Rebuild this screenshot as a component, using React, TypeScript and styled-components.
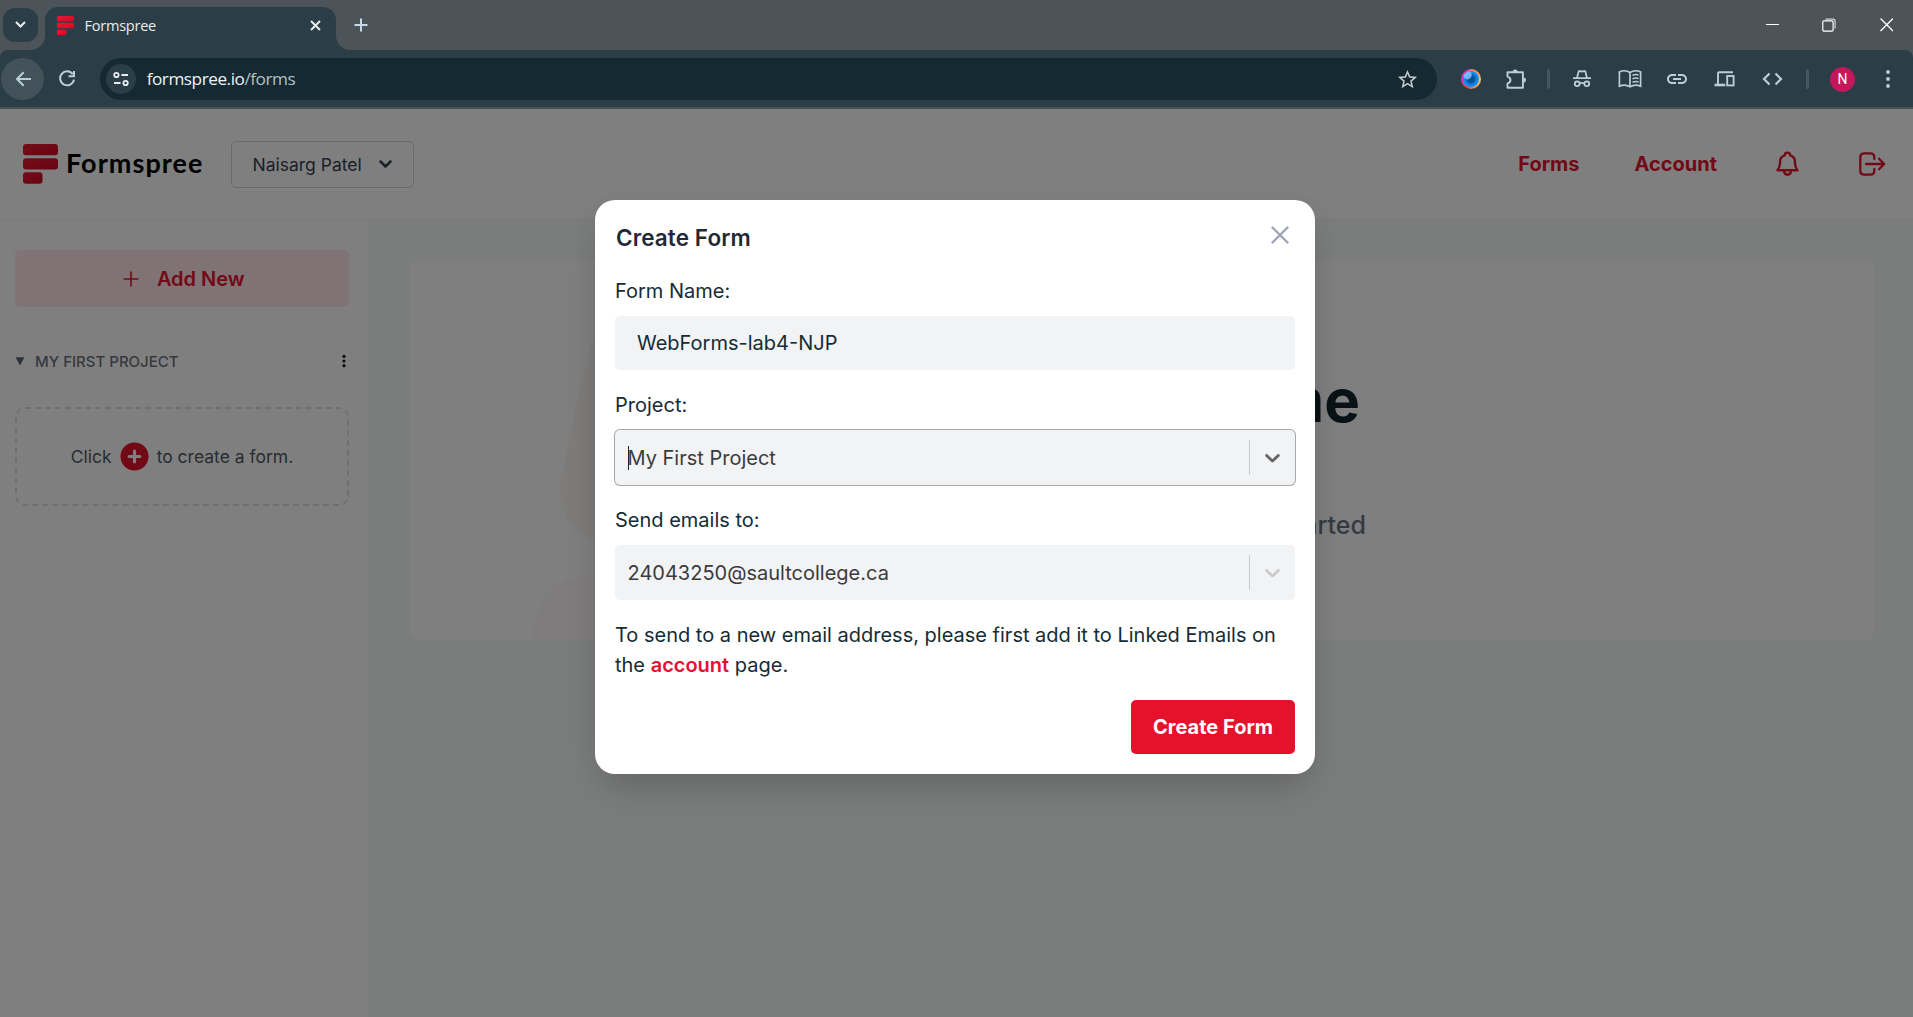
import React from "react";
import styled, { createGlobalStyle } from "styled-components";

const GlobalStyle = createGlobalStyle`
  *, *::before, *::after { box-sizing: border-box; }
  body { margin: 0; overflow: hidden; font-family: Inter, "Liberation Sans", sans-serif; }
  button, input { font: inherit; }
  svg { display: block; flex: none; }
`;

const Window = styled.div`
  display: flex;
  flex-direction: column;
  width: 100vw;
  height: 100vh;
  overflow: hidden;
  background: #4c5459;
`;

/* ---------- browser chrome ---------- */

const TitleBar = styled.div`
  display: flex;
  align-items: flex-start;
  height: 50px;
  padding-left: 3px;
  background: #4c5459;
  color: #e6ecef;
`;

const TabSearch = styled.div`
  display: flex;
  align-items: center;
  justify-content: center;
  width: 35px;
  height: 34px;
  margin-top: 8px;
  border-radius: 12px;
  background: #2b3d46;
`;

const Tab = styled.div`
  position: relative;
  display: flex;
  align-items: center;
  width: 291px;
  height: 43px;
  margin: 7px 0 0 7px;
  padding: 0 15px 7px 11.5px;
  border-radius: 13px 13px 0 0;
  background: #2b3d46;

  &::before, &::after {
    content: "";
    position: absolute;
    bottom: 0;
    width: 14px;
    height: 14px;
  }
  &::before {
    left: -14px;
    background: radial-gradient(circle at 0 0, transparent 13.5px, #2b3d46 14.2px);
  }
  &::after {
    right: -14px;
    background: radial-gradient(circle at 100% 0, transparent 13.5px, #2b3d46 14.2px);
  }
`;

const TabTitle = styled.span`
  flex: 1;
  padding-left: 11px;
  font: 400 14.6px/20px "Open Sans", "Noto Sans", sans-serif;
  letter-spacing: -0.28px;
`;

const NewTab = styled.div`
  margin: 16px 0 0 16px;
`;

const WindowControls = styled.div`
  display: flex;
  align-items: center;
  height: 50px;
  margin-left: auto;
  padding-right: 20px;
  gap: 43.5px;
`;

const Toolbar = styled.div`
  display: flex;
  align-items: center;
  height: 59px;
  padding: 1px 0 0 1px;
  border-bottom: 2px solid #4a5053;
  border-radius: 8px 8px 0 0;
  background: #2b3d46;
  color: #b9cfd8;
`;

const BackButton = styled.div`
  display: flex;
  align-items: center;
  justify-content: center;
  width: 43px;
  height: 42px;
  border-radius: 50%;
  background: #435259;
`;

const ReloadButton = styled.div`
  margin-left: 11px;
`;

const AddressBar = styled.div`
  display: flex;
  align-items: center;
  width: 1337px;
  height: 42px;
  margin: 0 11.5px 0 auto;
  padding: 0 18px 0 6px;
  border-radius: 21px;
  background: #152932;
  color: #c7cbcd;
`;

const SiteInfo = styled.div`
  display: flex;
  align-items: center;
  justify-content: center;
  width: 30px;
  height: 30px;
  border-radius: 50%;
  background: #2b3d46;
  color: #e6ecef;
`;

const Url = styled.div`
  flex: 1;
  padding-left: 10.5px;
  font: 400 17.2px/24px "Open Sans", "Noto Sans", sans-serif;
  letter-spacing: -0.46px;
  color: #b7bfc3;
`;

const UrlHost = styled.span`
  color: #eef2f4;
`;

const ToolSlot = styled.div<{ $w: number }>`
  display: flex;
  align-items: center;
  justify-content: center;
  width: ${(p) => p.$w}px;
`;

const ToolDivider = styled.div<{ $gap: number }>`
  width: 3px;
  height: 20px;
  margin: 0 ${(p) => p.$gap}px;
  border-radius: 2px;
  background: #435862;
`;

const Orb = styled.div`
  width: 20px;
  height: 20px;
  padding: 2px;
  border-radius: 50%;
  background: conic-gradient(#ff7a5c, #ffc04d 90deg, #ff9a4d 150deg, #f0464f 200deg, #e035a8 270deg, #d438c0 340deg, #ff7a5c);
`;

const OrbCore = styled.div`
  width: 16px;
  height: 16px;
  border-radius: 50%;
  background:
    radial-gradient(circle at 28% 25%, rgba(150, 205, 255, 0.75) 0 3.5px, transparent 5px),
    radial-gradient(circle, #064a86 0 2.5px, #0764b8 4px, #0a8bf5 6.5px, #1aa0ff);
`;

const Avatar = styled.div`
  display: flex;
  align-items: center;
  justify-content: center;
  width: 25px;
  height: 25px;
  border-radius: 50%;
  background: #c2185b;
  color: #fff;
  font: 400 14px/25px Roboto, sans-serif;
`;

/* ---------- page ---------- */

const Page = styled.div`
  position: relative;
  flex: 1;
  display: flex;
  flex-direction: column;
  background: #fff;
`;

const Header = styled.header`
  display: flex;
  align-items: center;
  height: 111px;
  padding: 0 27px 0 23px;
  border-bottom: 1px solid #f1f3f4;
`;

const Wordmark = styled.span`
  margin: -3px 0 0 8px;
  font: 700 27px/34px Lato, sans-serif;
  letter-spacing: 1.05px;
  color: #000;
`;

const AccountSelect = styled.div`
  display: flex;
  align-items: center;
  justify-content: space-between;
  width: 183px;
  height: 47px;
  margin: 0 0 0 auto;
  padding: 0 21px 0 20.5px;
  border: 1px solid #d5d5d7;
  border-radius: 5px;
  color: #374151;
  font-size: 17.5px;
`;

const Brand = styled.div`
  display: flex;
  align-items: center;
  width: 391px;
`;

const Nav = styled.nav`
  display: flex;
  align-items: center;
  margin-left: auto;
  color: #e5122e;
  font-size: 20px;
  font-weight: 700;
`;

const NavLink = styled.a`
  margin-right: 55px;
`;

const BellSlot = styled.span`
  margin: 0 60px 0 4px;
`;

const Body = styled.div`
  flex: 1;
  display: flex;
`;

const Sidebar = styled.aside`
  display: flex;
  flex-direction: column;
  width: 370px;
  padding: 30px 20px 0 15px;
  border-right: 1px solid #f3f5f5;
`;

const AddNew = styled.button`
  display: flex;
  align-items: center;
  justify-content: center;
  gap: 17.5px;
  height: 57px;
  padding: 0 0 0 4px;
  border: 0;
  border-radius: 5px;
  background: #ffe7ea;
  color: #e5122e;
  font-size: 20px;
  font-weight: 600;
`;

const ProjectRow = styled.div`
  display: flex;
  align-items: center;
  height: 24px;
  margin-top: 42px;
  color: #6b7280;
  font-size: 15px;
`;

const ProjectName = styled.span`
  flex: 1;
  padding-left: 10px;
  font-weight: 500;
  font-size: 15px;
`;

const EmptyBox = styled.div`
  display: flex;
  align-items: center;
  justify-content: center;
  gap: 8px;
  height: 99px;
  margin-top: 34px;
  border: 2px dashed #e1e1e3;
  border-radius: 10px;
  color: #4f5965;
  font-size: 17.5px;
`;

const Main = styled.main`
  flex: 1;
  padding: 40px 39px 0 40px;
  background: #f7fbf9;
`;

const Card = styled.section`
  position: relative;
  display: flex;
  flex-direction: column;
  align-items: flex-end;
  height: 380px;
  padding-top: 104px;
  border-radius: 10px;
  overflow: hidden;
  background: #fff;
`;

const CardArt = styled.svg`
  position: absolute;
  left: 0;
  top: 0;
`;

const CardTitle = styled.h1`
  margin: 0 514px 0 0;
  font-size: 60px;
  line-height: 72px;
  font-weight: 700;
  color: #12262e;
`;

const CardText = styled.p`
  margin: 69px 508px 0 0;
  font-size: 25px;
  line-height: 40px;
  font-weight: 500;
  color: #687587;
`;

/* ---------- dialog ---------- */

const Overlay = styled.div`
  position: absolute;
  inset: 0;
  display: flex;
  align-items: flex-start;
  justify-content: center;
  padding: 91px 3px 0 0;
  background: rgba(0, 0, 0, 0.5);
`;

const Dialog = styled.div`
  display: flex;
  flex-direction: column;
  width: 720px;
  height: 574px;
  padding: 20px;
  border-radius: 20px;
  background: #fff;
  box-shadow: 0 20px 40px -10px rgba(0, 0, 0, 0.19), 0 6px 30px -6px rgba(0, 0, 0, 0.06);
  color: #152c36;
  font-size: 20px;
  line-height: 30px;
`;

const DialogHead = styled.div`
  display: flex;
  align-items: center;
  justify-content: space-between;
  height: 36px;
  margin-bottom: 20px;
  padding: 0 6px 0 1px;
`;

const DialogTitle = styled.h2`
  margin: 0;
  font-size: 22.5px;
  font-weight: 600;
  letter-spacing: 0.1px;
  color: #1f2937;
`;

const CloseButton = styled.span`
  margin-top: -6px;
`;

const Label = styled.label`
  height: 30px;
  margin-bottom: 10px;
`;

const TextInput = styled.input`
  height: 54px;
  margin-bottom: 20px;
  padding: 0 22px;
  border: 0;
  border-radius: 5px;
  outline: 0;
  background: #f2f3f5;
  color: #152c36;
`;

const Select = styled.div<{ $focused?: boolean }>`
  display: flex;
  align-items: center;
  height: 55px;
  margin-bottom: 20px;
  padding-left: 12.5px;
  border-radius: 5px;
  background: #f2f3f5;
  color: #3b3b3b;
  box-shadow: ${(p) => (p.$focused ? "0 0 0 1px #a9a9aa" : "none")};
`;

const SelectValue = styled.span`
  position: relative;
  flex: 1;
`;

const Caret = styled.span`
  position: absolute;
  left: 0.5px;
  top: 3px;
  width: 1px;
  height: 24px;
  background: #222;
`;

const SelectToggle = styled.span<{ $muted?: boolean }>`
  display: flex;
  align-items: center;
  height: 35px;
  padding: 0 10px;
  border-left: 1px solid #ccc;
  color: ${(p) => (p.$muted ? "#ccc" : "#666")};
`;

const Hint = styled.p`
  margin: 0;
`;

const HintLine = styled.span`
  display: block;
  white-space: nowrap;
`;

const AccountLink = styled.a`
  font-weight: 600;
  color: #e5122e;
`;

const SubmitButton = styled.button`
  align-self: flex-end;
  width: 164px;
  height: 54px;
  margin-top: 20px;
  padding: 0;
  border: 0;
  border-radius: 5px;
  background: #e6112b;
  color: #fff;
  font-weight: 700;
`;

/* ---------- drawings ---------- */

const Mark = ({ w, h }: { w: number; h: number }) => (
  <svg width={w} height={h} viewBox="0 0 35 39" preserveAspectRatio="none">
    <defs>
      <linearGradient id="mark" x1="0" y1="0" x2="1" y2="1">
        <stop offset="0" stopColor="#ee1733" />
        <stop offset="1" stopColor="#cf0a25" />
      </linearGradient>
    </defs>
    <rect width="35" height="11.2" rx="3" fill="url(#mark)" />
    <rect y="14" width="35" height="11.2" rx="3" fill="url(#mark)" />
    <rect y="28" width="19.5" height="11.2" rx="3" fill="url(#mark)" />
  </svg>
);

type GlyphProps = {
  d: string;
  w?: number;
  h?: number;
  box?: string;
  sw?: number;
  round?: boolean;
  color?: string;
};

const Glyph = ({ d, w = 20, h = w, box = `0 0 ${w} ${h}`, sw = 2, round, color = "currentColor" }: GlyphProps) => (
  <svg
    width={w}
    height={h}
    viewBox={box}
    fill="none"
    stroke={color}
    strokeWidth={sw}
    strokeLinecap={round ? "round" : "butt"}
    strokeLinejoin={round ? "round" : "miter"}
  >
    <path d={d} />
  </svg>
);

const KebabDots = ({ h, gap, r, color = "currentColor" }: { h: number; gap: number; r: number; color?: string }) => (
  <svg width={6} height={h} fill={color}>
    {[-1, 0, 1].map((i) => (
      <circle key={i} cx={3} cy={h / 2 + i * gap} r={r} />
    ))}
  </svg>
);

const SelectChevron = () => (
  <svg width="25" height="25" viewBox="0 0 20 20" fill="currentColor">
    <path d="M4.516 7.548c0.436-0.446 1.043-0.481 1.576 0l3.908 3.747 3.908-3.747c0.533-0.481 1.141-0.446 1.574 0 0.436 0.445 0.408 1.197 0 1.615-0.406 0.418-4.695 4.502-4.695 4.502-0.217 0.223-0.502 0.335-0.787 0.335s-0.57-0.112-0.789-0.335c0 0-4.287-4.084-4.695-4.502s-0.436-1.17 0-1.615z" />
  </svg>
);

const Chrome = () => (
  <>
    <TitleBar>
      <TabSearch>
        <Glyph d="M1 1l4.5 4.5L10 1" w={11} h={8} sw={2.2} color="#e6ecef" />
      </TabSearch>
      <Tab>
        <Mark w={17} h={19} />
        <TabTitle>Formspree</TabTitle>
        <Glyph d="M1 1l9 9M10 1l-9 9" w={11} sw={2} />
      </Tab>
      <NewTab>
        <Glyph d="M9 2.5v13M2.5 9h13" w={18} sw={2} color="#c3dbe4" />
      </NewTab>
      <WindowControls>
        <Glyph d="M0 5.5h13" w={13} sw={1} color="#fff" />
        <svg width="14" height="14" fill="none" stroke="#fff" strokeWidth="1.2">
          <path d="M3.5 1.1h7.4a2.2 2.2 0 0 1 2.2 2.2v7.2" stroke="#cfd3d5" />
          <rect x=".8" y="2.9" width="10.3" height="10.3" rx="1.2" />
        </svg>
        <Glyph d="M.5 .5l12.5 12.5M13 .5L.5 13" w={13.5} sw={1.3} color="#fff" />
      </WindowControls>
    </TitleBar>
    <Toolbar>
      <BackButton>
        <Glyph d="M16 8H2M8.7 1.3L2 8l6.7 6.7" w={16} sw={2} />
      </BackButton>
      <ReloadButton>
        <Glyph d="M17.8 6.2A7 7 0 1 0 19 11.6M19 3v5.2h-5.4" w={24} box="0 -1 24 24" sw={2} />
      </ReloadButton>
      <AddressBar>
        <SiteInfo>
          <svg width="16" height="16" fill="none" stroke="currentColor" strokeWidth="1.8">
            <circle cx="3.4" cy="4" r="2.2" />
            <path d="M8.5 4H15M1 12h6.5" />
            <circle cx="12.6" cy="12" r="2.2" />
          </svg>
        </SiteInfo>
        <Url>
          <UrlHost>formspree.io</UrlHost>/forms
        </Url>
        <svg width="23" height="23" viewBox="0 0 24 24" fill="currentColor">
          <path d="M22 9.24l-7.19-.62L12 2 9.19 8.63 2 9.24l5.46 4.73L5.82 21 12 17.27 18.18 21l-1.63-7.03L22 9.24zM12 15.4l-3.76 2.27 1-4.28-3.32-2.88 4.38-.38L12 6.1l1.71 4.04 4.38.38-3.32 2.88 1 4.28L12 15.4z" />
        </svg>
      </AddressBar>
      <ToolSlot $w={45}>
        <Orb>
          <OrbCore />
        </Orb>
      </ToolSlot>
      <ToolSlot $w={45}>
        <svg width="22" height="22" fill="none" stroke="currentColor" strokeWidth="1.9" strokeLinejoin="round">
          <path d="M2.5 4.3h15.4v15.4H2.5v-4.3c1.9-.5 3-1.7 3-3.4s-1.1-2.9-3-3.4z" />
          <path d="M7.6 4a2.6 2.6 0 0 1 5.2 0zM18.4 9.4a2.6 2.6 0 0 1 0 5.2z" fill="currentColor" stroke="none" />
        </svg>
      </ToolSlot>
      <ToolDivider $gap={8.5} />
      <ToolSlot $w={47.5}>
        <svg width="20" height="20" fill="none" stroke="currentColor" strokeWidth="1.8">
          <path d="M1 9.2h18M4.9 9.2l1.7-6.5c.2-.6.6-.8 1.2-.6 1.4.5 3 .5 4.4 0 .6-.2 1 0 1.2.6l1.7 6.5" />
          <circle cx="5.2" cy="14.8" r="2.4" />
          <circle cx="14.8" cy="14.8" r="2.4" />
          <path d="M7.6 14.6c1.4-.9 3.4-.9 4.8 0" />
        </svg>
      </ToolSlot>
      <ToolSlot $w={47.5}>
        <svg width="24" height="20" fill="none" stroke="currentColor" strokeWidth="1.7">
          <path d="M12 3.4C9 1.6 4.5 1.5 1.4 2.9v14.3C4.5 15.9 9 16 12 17.8 15 16 19.5 15.9 22.6 17.2V2.9C19.5 1.5 15 1.6 12 3.4zM12 3.4v14.4" />
          <path d="M14.5 6.3c2-.8 4-.9 6-.4M14.5 9.8c2-.8 4-.9 6-.4M14.5 13.3c2-.8 4-.9 6-.4" strokeWidth="1.5" />
        </svg>
      </ToolSlot>
      <ToolSlot $w={47.5}>
        <svg width="24" height="24" viewBox="0 0 24 24" fill="currentColor">
          <path d="M3.9 12c0-1.71 1.39-3.1 3.1-3.1h4V7H7c-2.76 0-5 2.24-5 5s2.24 5 5 5h4v-1.9H7c-1.71 0-3.1-1.39-3.1-3.1zM8 13h8v-2H8v2zm9-6h-4v1.9h4c1.71 0 3.1 1.39 3.1 3.1s-1.39 3.1-3.1 3.1h-4V17h4c2.76 0 5-2.24 5-5s-2.24-5-5-5z" />
        </svg>
      </ToolSlot>
      <ToolSlot $w={47.5}>
        <svg width="21" height="18" fill="none" stroke="currentColor" strokeWidth="1.9">
          <path d="M19 2.2H5.2c-.8 0-1.2.4-1.2 1.2v11.4" />
          <path d="M.5 15h10.8" strokeWidth="2.6" />
          <rect x="13.2" y="6" width="6.4" height="9.4" />
        </svg>
      </ToolSlot>
      <ToolSlot $w={47.5}>
        <Glyph d="M7.5 1.5L2 7l5.5 5.5M13.5 1.5L19 7l-5.5 5.5" w={21} h={14} sw={2.2} />
      </ToolSlot>
      <ToolDivider $gap={10.2} />
      <ToolSlot $w={46}>
        <Avatar>N</Avatar>
      </ToolSlot>
      <ToolSlot $w={45}>
        <KebabDots h={20} gap={7} r={1.9} />
      </ToolSlot>
      <ToolSlot $w={2.5} />
    </Toolbar>
  </>
);

const Dashboard = () => (
  <>
    <Header>
      <Brand>
        <Mark w={35} h={39.5} />
        <Wordmark>Formspree</Wordmark>
        <AccountSelect>
          Naisarg Patel
          <Glyph d="M1.5 1.5L6.5 6.5l5-5" w={13} h={8} sw={2.5} round />
        </AccountSelect>
      </Brand>
      <Nav>
        <NavLink>Forms</NavLink>
        <NavLink>Account</NavLink>
        <BellSlot>
          <Glyph
            d="M1.5 19.5h21c-2-2.200-2.700-4.500-2.700-7.500V10.500c0-3-1.800-5.500-4.800-6.500 0-1.700-1.300-2.700-3-2.700S9 2.300 9 4c-3 1-4.800 3.500-4.800 6.500V12c0 3-.7 5.300-2.700 7.500zM8.300 20.500c.3 2.600 1.900 3.700 3.700 3.700s3.400-1.100 3.700-3.700"
            w={23}
            h={26}
            box="0 0 24 26"
            sw={2.5}
            round
          />
        </BellSlot>
        <Glyph
          d="M15.300 7V5.200c0-2.500-1.400-3.900-3.900-3.900H5.200c-2.500 0-3.900 1.400-3.900 3.900v13.600c0 2.500 1.400 3.900 3.900 3.900h6.200c2.500 0 3.900-1.400 3.900-3.900V17M7 12h18M20 6.800l5.200 5.200-5.200 5.200"
          w={27}
          h={24}
          sw={2.300}
          round
        />
      </Nav>
    </Header>
    <Body>
      <Sidebar>
        <AddNew>
          <Glyph d="M8 .5v15M.5 8h15" w={16} sw={1.600} />
          Add New
        </AddNew>
        <ProjectRow>
          <svg width="10" height="10" fill="#5b6470">
            <path d="M.6 1.300h8.800L5 9.500z" />
          </svg>
          <ProjectName>MY FIRST PROJECT</ProjectName>
          <ToolSlot $w={10}>
            <KebabDots h={14} gap={4.700} r={1.600} color="#0b1a2a" />
          </ToolSlot>
        </ProjectRow>
        <EmptyBox>
          Click
          <svg width="29" height="29" viewBox="0 0 29 29">
            <circle cx="14.500" cy="14.500" r="14" fill="#e5122e" />
            <path d="M14.500 9.200v10.600M9.200 14.500h10.600" stroke="#fff" strokeWidth="3.200" strokeLinecap="round" />
          </svg>
          to create a form.
        </EmptyBox>
      </Sidebar>
      <Main>
        <Card>
          <CardArt width="400" height="380">
            <path d="M200 30C176 90 160 170 150.500 221c-4 35 12 52 34 60 30 10 60 12 90 12V30z" fill="#fdf9f4" />
            <path d="M121 380c6-30 12-46 26-56 16-9 40-9 80-9v65z" fill="#fff9fb" />
          </CardArt>
          <CardTitle>Welcome</CardTitle>
          <CardText>Create a form to get started</CardText>
        </Card>
      </Main>
    </Body>
  </>
);

const CreateFormDialog = () => (
  <Overlay>
    <Dialog role="dialog">
      <DialogHead>
        <DialogTitle>Create Form</DialogTitle>
        <CloseButton>
          <Glyph d="M1.500 1.500l15 15M16.500 1.500l-15 15" w={18} sw={2.300} round color="#9ca3b0" />
        </CloseButton>
      </DialogHead>
      <Label>Form Name:</Label>
      <TextInput defaultValue="WebForms-lab4-NJP" />
      <Label>Project:</Label>
      <Select $focused>
        <SelectValue>
          <Caret />
          My First Project
        </SelectValue>
        <SelectToggle>
          <SelectChevron />
        </SelectToggle>
      </Select>
      <Label>Send emails to:</Label>
      <Select>
        <SelectValue>24043250@saultcollege.ca</SelectValue>
        <SelectToggle $muted>
          <SelectChevron />
        </SelectToggle>
      </Select>
      <Hint>
        <HintLine>To send to a new email address, please first add it to Linked Emails on</HintLine>
        <HintLine>
          the <AccountLink>account</AccountLink> page.
        </HintLine>
      </Hint>
      <SubmitButton>Create Form</SubmitButton>
    </Dialog>
  </Overlay>
);

export default function App() {
  return (
    <Window>
      <GlobalStyle />
      <Chrome />
      <Page>
        <Dashboard />
        <CreateFormDialog />
      </Page>
    </Window>
  );
}
